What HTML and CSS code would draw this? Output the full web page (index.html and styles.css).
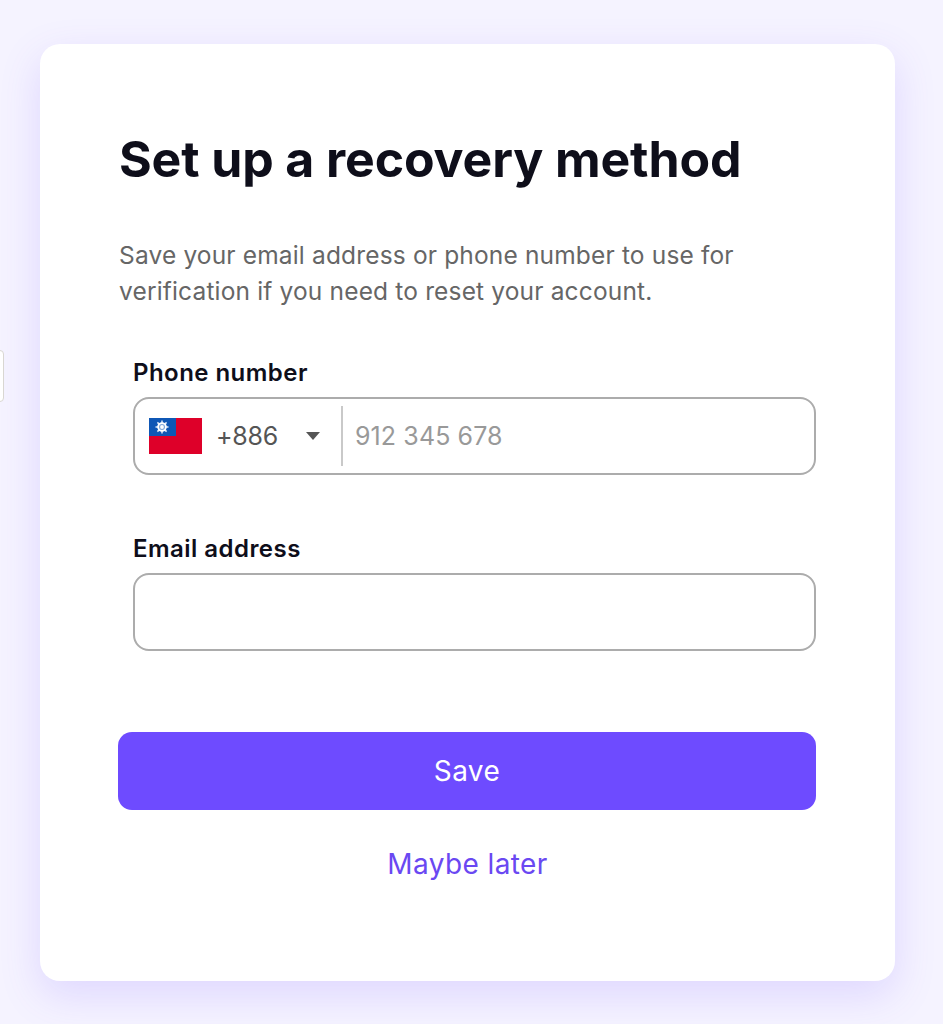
FILE: index.html
```html
<!doctype html>
<html lang="en">
<head>
  <meta charset="utf-8" />
  <meta name="viewport" content="width=device-width, initial-scale=1" />
  <title>Set up a recovery method</title>
  <link rel="stylesheet" href="styles.css">
</head>

<body>
  <div class="sideTab"></div>

  <main class="card">
    <h1>Set up a recovery method</h1>
    <p class="intro">Save your email address or phone number to use for verification if you need to reset your account.</p>

    <form class="fields">
      <div class="field">
        <label class="label" for="phone">Phone number</label>
        <div class="inputBox phoneBox">
          <div class="country">
            <svg class="flag" viewBox="0 0 53 36" aria-hidden="true">
              <rect width="53" height="36" fill="#de0029"/>
              <rect width="27" height="18" fill="#0f57b5"/>
              <g transform="translate(13 9)">
                <path d="M0-6.5V6.5M-6.5 0H6.5M-4.6-4.6 4.6 4.6M-4.6 4.6 4.6-4.6" stroke="#dfe9f7" stroke-width="1.5"/>
                <circle r="4.8" fill="#fff"/>
                <circle r="3" fill="#7fa6d8"/>
                <circle r="1.9" fill="#fff"/>
              </g>
            </svg>
            <span class="dial">+886</span>
            <svg class="caret" viewBox="0 0 14 8" aria-hidden="true"><path d="M0 0h14L7 8z" fill="#555"/></svg>
          </div>
          <input class="phoneInput" id="phone" type="text" placeholder="912 345 678">
        </div>
      </div>

      <div class="field">
        <label class="label" for="email">Email address</label>
        <div class="inputBox">
          <input id="email" type="text">
        </div>
      </div>

      <button class="saveBtn" type="button">Save</button>
      <a class="later" href="#">Maybe later</a>
    </form>
  </main>
</body>
</html>
```

FILE: styles.css
```css
:root{
  --bg:#f5f3ff;
  --text:#0e0e1a;
  --muted:#666;
  --stroke:#acacac;
  --accent:#6e4bff;
  --link:#6a48f2;
}

*{ box-sizing:border-box; }
html,body{ height:100%; }
body{
  margin:0;
  height:1024px;
  overflow:hidden;
  padding:44px 48px 43px 40px;
  font-family:Inter, "Noto Sans", sans-serif;
  background:var(--bg);
  color:var(--text);
}

.sideTab{
  position:absolute;
  left:-8px;
  top:350px;
  width:12px;
  height:52px;
  background:#fff;
  border:1px solid #d9d7d2;
  border-radius:4px;
}

.card{
  height:937px;
  background:#fff;
  border-radius:20px;
  padding:85px 79px 0 79px;
  box-shadow:0 14px 40px rgba(110,75,255,.17);
}

h1{
  margin:0;
  font-size:50px;
  line-height:60px;
  font-weight:700;
  letter-spacing:-.12px;
}

.intro{
  margin:48px 0 0 0;
  font-size:24.5px;
  line-height:36px;
  letter-spacing:.16px;
  color:var(--muted);
}

.fields{
  margin-top:48px;
  display:flex;
  flex-direction:column;
}

.field{
  padding:0 0 0 14px;
  margin-bottom:57px;
}
.field:first-child{ margin-bottom:58px; }
.label{
  display:block;
  margin-bottom:8px;
  font-size:24px;
  line-height:32px;
  font-weight:600;
  letter-spacing:.46px;
}

.inputBox{
  height:78px;
  border:2px solid var(--stroke);
  border-radius:16px;
  display:flex;
  align-items:center;
  background:#fff;
}
.inputBox input{
  flex:1;
  min-width:0;
  height:100%;
  border:none;
  outline:none;
  background:transparent;
  font:inherit;
  font-size:25px;
  letter-spacing:.1px;
  padding:0 12px;
  color:var(--text);
}
.inputBox input::placeholder{ color:#999; opacity:1; }

.country{
  width:208px;
  height:60px;
  flex:none;
  display:flex;
  align-items:center;
  padding-left:14px;
  border-right:2px solid #c9c9c9;
}
.flag{ width:53px; height:36px; flex:none; }
.dial{
  margin-left:14px;
  font-size:25px;
  letter-spacing:-.2px;
  color:#555;
}
.caret{ width:14px; height:8px; margin-left:28px; flex:none; }

.saveBtn{
  height:78px;
  margin-top:24px;
  margin-left:-1px;
  border:none;
  border-radius:14px;
  background:var(--accent);
  color:#fff;
  font:inherit;
  font-size:28px;
  letter-spacing:.4px;
  cursor:pointer;
}

.later{
  margin-top:35px;
  text-align:center;
  font-size:28px;
  line-height:38px;
  letter-spacing:.4px;
  color:var(--link);
  text-decoration:none;
}
```
